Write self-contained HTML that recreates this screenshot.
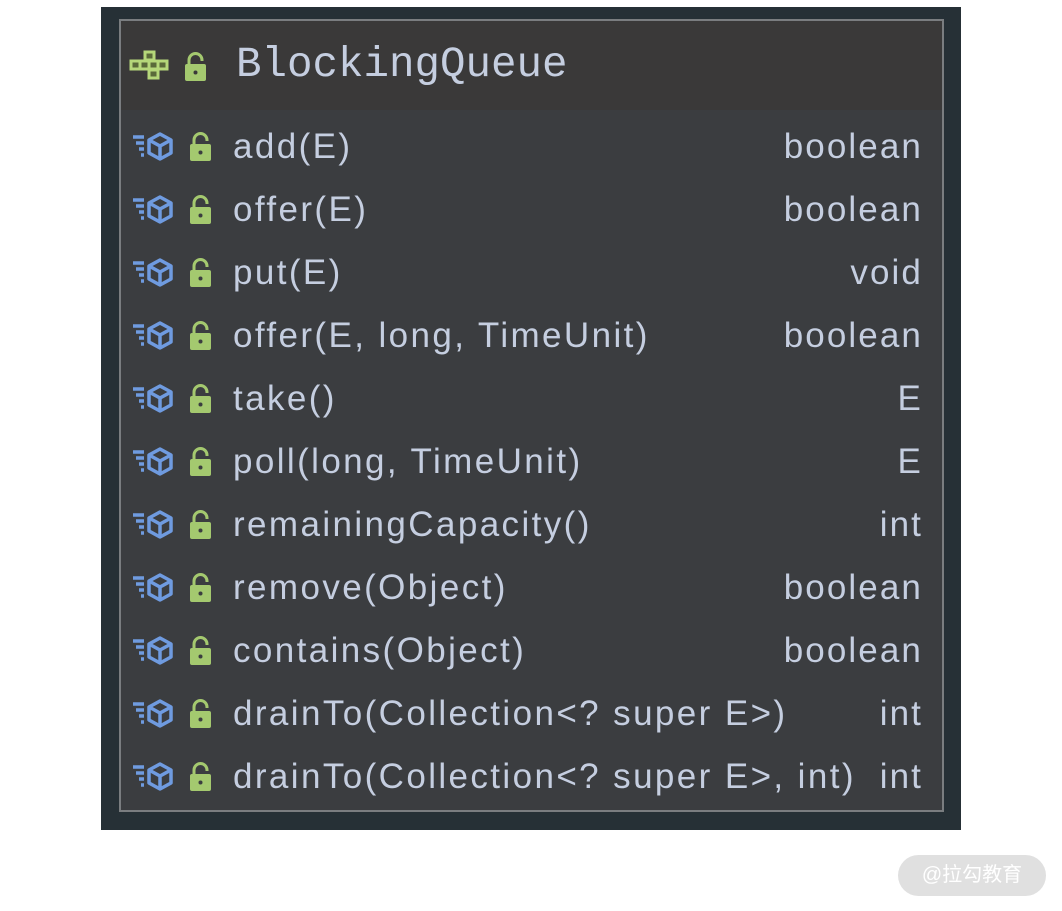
<!DOCTYPE html>
<html><head><meta charset="utf-8"><style>
body{margin:0;width:1062px;height:911px;background:#fff;position:relative;overflow:hidden;font-family:"Liberation Sans",sans-serif}
.outer{position:absolute;left:101px;top:7px;width:860px;height:823px;background:#263036}
.inner{position:absolute;left:119px;top:19px;width:821px;height:789px;border:2px solid #7a7d80;background:#3b3d40}
.hdr{position:absolute;left:0;top:0;width:821px;height:89px;background:#3a3939}
.title{position:absolute;left:115px;top:18px;font-family:"Liberation Mono",monospace;font-size:42.5px;color:#c5cee0;line-height:52px}
.row{position:absolute;left:0;width:821px;height:63px}
.row .n{position:absolute;left:112px;top:0;line-height:63px;font-size:35px;letter-spacing:2.4px;color:#c5cee0;white-space:nowrap}
.row .t{position:absolute;right:19px;top:0;line-height:63px;font-size:35px;letter-spacing:2.1px;color:#c5cee0;white-space:nowrap}
.row svg{position:absolute;left:10px;top:16px}
.wm{position:absolute;left:898px;top:855px;width:148px;height:41px;border-radius:21px;background:#e0e0e0;color:#fff;font-family:"Liberation Sans","Noto Sans CJK SC",sans-serif;font-size:20px;line-height:41px;text-align:center}
</style></head><body>
<div class="outer"></div>
<div class="inner">
<div class="hdr">
<svg style="position:absolute;left:8px;top:28px" width="82" height="36" viewBox="0 0 82 36">
<g fill="#5a6a3a" stroke="#b5d77a" stroke-width="3">
<rect x="16" y="3" width="9" height="8"/><rect x="2" y="12" width="9" height="8"/><rect x="11" y="12" width="9" height="8"/><rect x="20" y="12" width="9" height="8"/><rect x="29" y="12" width="9" height="8"/><rect x="20" y="21" width="9" height="8"/>
</g>
<rect x="56" y="15" width="21" height="17" rx="2" fill="#a4c96f"/>
<path d="M60 15v-4a6.5 6.5 0 0 1 13 0v1" fill="none" stroke="#a4c96f" stroke-width="3"/>
<circle cx="66.5" cy="23.5" r="2" fill="#3a3939"/>
</svg>
<div class="title">BlockingQueue</div>
</div>
</div>
<div id="rows" style="position:absolute;left:121px;top:115px"></div>
<div class="wm">@拉勾教育</div>
<script>
var d=[["add(E)","boolean"],["offer(E)","boolean"],["put(E)","void"],["offer(E, long, TimeUnit)","boolean"],["take()","E"],["poll(long, TimeUnit)","E"],["remainingCapacity()","int"],["remove(Object)","boolean"],["contains(Object)","boolean"],["drainTo(Collection&lt;? super E&gt;)","int"],["drainTo(Collection&lt;? super E&gt;, int)","int"]];
var ic='<svg width="84" height="32" viewBox="0 0 84 32"><g stroke="#6f9be0" stroke-width="3.5" fill="none"><path d="M2 6h11M5 12h8M8 18h5M10 24h3"/><path d="M29 3l11 6v13l-11 6l-11-6V9z" stroke-linejoin="round"/><path d="M18 9l11 6l11-6M29 15v13"/></g><rect x="59" y="13" width="21" height="17" rx="2" fill="#a4c96f"/><path d="M63 13v-4a6.5 6.5 0 0 1 13 0v1" fill="none" stroke="#a4c96f" stroke-width="3"/><circle cx="69.5" cy="21.5" r="2" fill="#3b3d40"/></svg>';
var h='';for(var i=0;i<d.length;i++){h+='<div class="row" style="top:'+(i*63)+'px">'+ic+'<div class="n">'+d[i][0]+'</div><div class="t">'+d[i][1]+'</div></div>';}
document.getElementById('rows').innerHTML=h;
</script>
</body></html>
